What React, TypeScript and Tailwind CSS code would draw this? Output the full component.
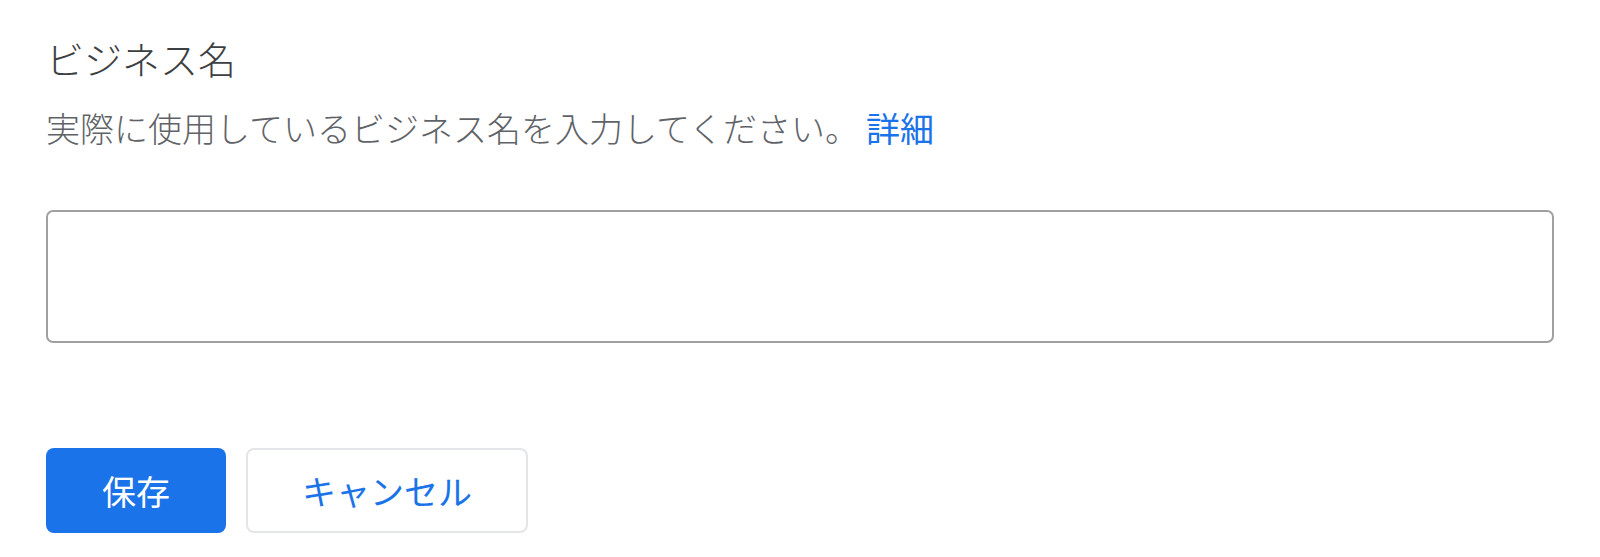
import React from 'react';

const font = "font-['Noto_Sans_CJK_JP','Noto_Sans',sans-serif]";

export default function App() {
  return (
    <div className={`w-[1600px] h-[557px] bg-white ${font}`}>
      <div className="px-[46px] pt-[36px]">
        <h1 className="text-[38px] leading-[44px] font-light text-[#3c4043]">ビジネス名</h1>
        <p className="mt-[26px] text-[34px] leading-[44px] font-light text-[#5f6368]">
          実際に使用しているビジネス名を入力してください。
          <a href="#" className="ml-[7px] font-normal text-[#1a73e8]">詳細</a>
        </p>

        <input
          type="text"
          className="mt-[60px] block w-full h-[133px] rounded-[7px] border-2 border-[#a0a0a0] bg-white px-4 outline-none"
        />

        <div className="mt-[105px] flex gap-[20px]">
          <button className="h-[85px] w-[180px] rounded-[8px] bg-[#1a73e8] text-[34px] font-normal text-white">
            保存
          </button>
          <button className="h-[85px] w-[282px] rounded-[8px] border-2 border-[#e3e5e8] bg-white text-[34px] font-normal text-[#1a73e8]">
            キャンセル
          </button>
        </div>
      </div>
    </div>
  );
}
